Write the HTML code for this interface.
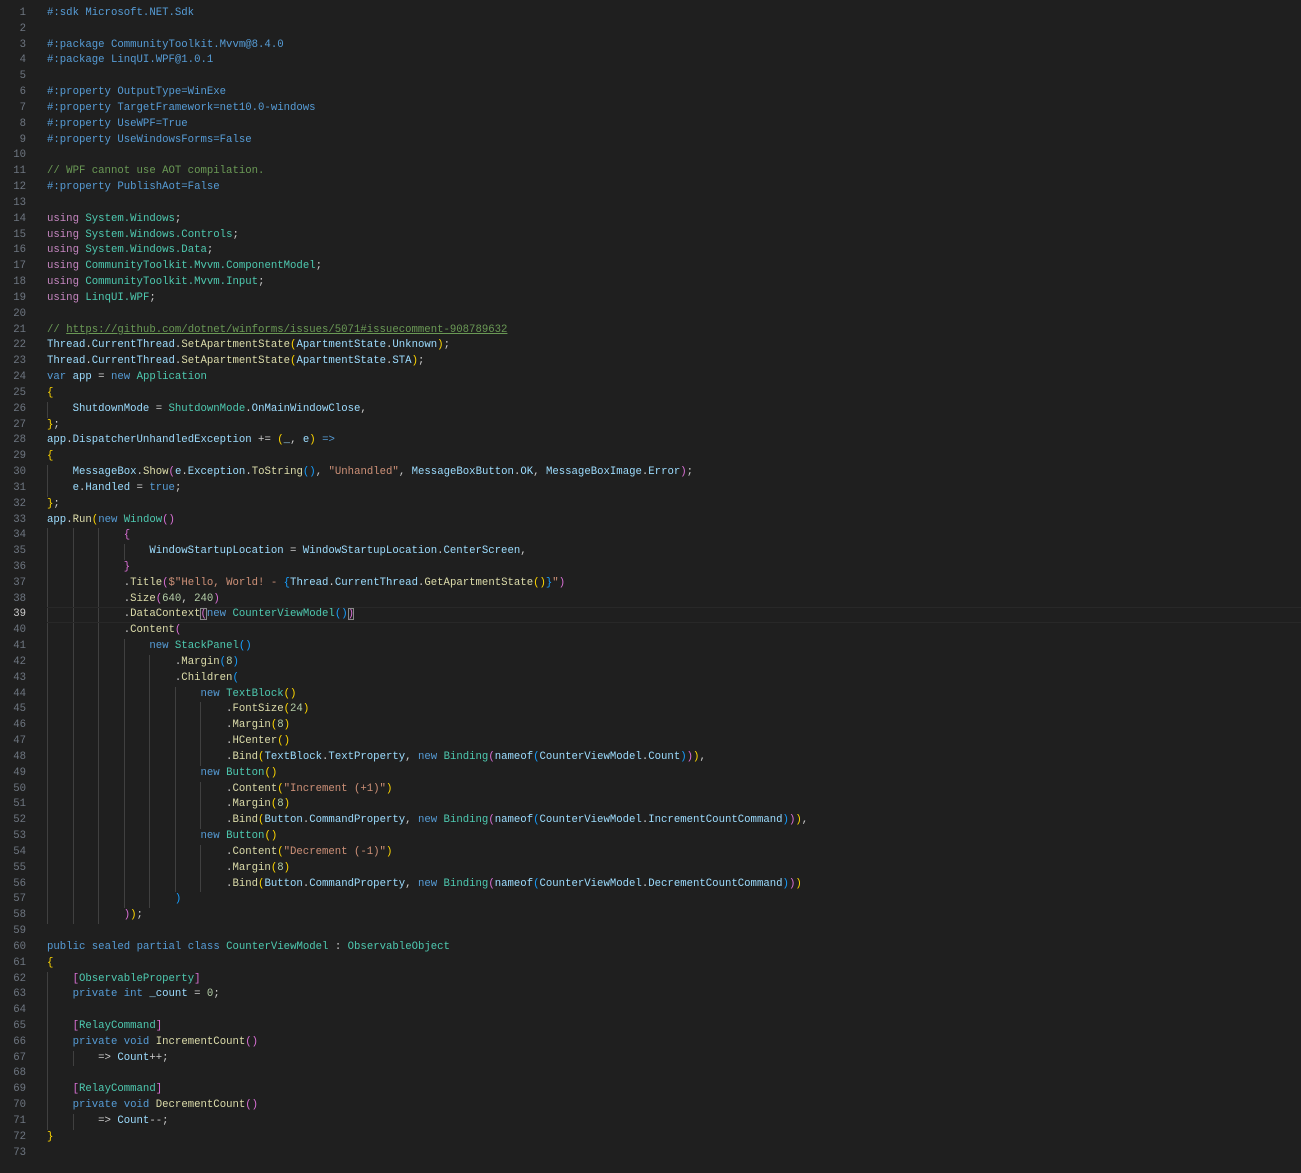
<!DOCTYPE html>
<html><head><meta charset="utf-8"><style>
html,body{margin:0;padding:0;background:#1f1f1f;}
body{width:1301px;height:1173px;overflow:hidden;position:relative;font-family:"Liberation Mono",monospace;font-size:10.67px;color:#cccccc;}
#code{position:absolute;left:0;top:6px;width:1301px;}
.l{position:relative;height:15.83px;line-height:15.83px;white-space:pre;padding-left:47px;}
.l b{position:absolute;left:0;width:26px;text-align:right;font-weight:normal;color:#6e7681;}
.cur b{color:#cccccc;}
.cur:after{content:"";position:absolute;left:47px;right:0;top:0;bottom:0;border-top:1px solid #282828;border-bottom:1px solid #282828;}
i{display:inline-block;width:4ch;height:15.83px;vertical-align:top;box-shadow:inset 1px 0 #404040;}
.k{color:#569cd6}.u{color:#c586c0}.t{color:#4ec9b0}.f{color:#dcdcaa}.v{color:#9cdcfe}.s{color:#ce9178}.n{color:#b5cea8}.c{color:#6a9955}
.y{color:#ffd700}.p{color:#da70d6}.q{color:#179fff}
.m{outline:1px solid #888;outline-offset:-1px}
.url{text-decoration:underline}
</style></head><body><div id="code">
<div class="l"><b>1</b><span class="k">#:sdk Microsoft.NET.Sdk</span></div>
<div class="l"><b>2</b></div>
<div class="l"><b>3</b><span class="k">#:package CommunityToolkit.Mvvm@8.4.0</span></div>
<div class="l"><b>4</b><span class="k">#:package LinqUI.WPF@1.0.1</span></div>
<div class="l"><b>5</b></div>
<div class="l"><b>6</b><span class="k">#:property OutputType=WinExe</span></div>
<div class="l"><b>7</b><span class="k">#:property TargetFramework=net10.0-windows</span></div>
<div class="l"><b>8</b><span class="k">#:property UseWPF=True</span></div>
<div class="l"><b>9</b><span class="k">#:property UseWindowsForms=False</span></div>
<div class="l"><b>10</b></div>
<div class="l"><b>11</b><span class="c">// WPF cannot use AOT compilation.</span></div>
<div class="l"><b>12</b><span class="k">#:property PublishAot=False</span></div>
<div class="l"><b>13</b></div>
<div class="l"><b>14</b><span class="u">using</span> <span class="t">System.Windows</span>;</div>
<div class="l"><b>15</b><span class="u">using</span> <span class="t">System.Windows.Controls</span>;</div>
<div class="l"><b>16</b><span class="u">using</span> <span class="t">System.Windows.Data</span>;</div>
<div class="l"><b>17</b><span class="u">using</span> <span class="t">CommunityToolkit.Mvvm.ComponentModel</span>;</div>
<div class="l"><b>18</b><span class="u">using</span> <span class="t">CommunityToolkit.Mvvm.Input</span>;</div>
<div class="l"><b>19</b><span class="u">using</span> <span class="t">LinqUI.WPF</span>;</div>
<div class="l"><b>20</b></div>
<div class="l"><b>21</b><span class="c">// <span class="url">https://github.com/dotnet/winforms/issues/5071#issuecomment-908789632</span></span></div>
<div class="l"><b>22</b><span class="v">Thread</span>.<span class="v">CurrentThread</span>.<span class="f">SetApartmentState</span><span class="y">(</span><span class="v">ApartmentState</span>.<span class="v">Unknown</span><span class="y">)</span>;</div>
<div class="l"><b>23</b><span class="v">Thread</span>.<span class="v">CurrentThread</span>.<span class="f">SetApartmentState</span><span class="y">(</span><span class="v">ApartmentState</span>.<span class="v">STA</span><span class="y">)</span>;</div>
<div class="l"><b>24</b><span class="k">var</span> <span class="v">app</span> = <span class="k">new</span> <span class="t">Application</span></div>
<div class="l"><b>25</b><span class="y">{</span></div>
<div class="l"><b>26</b><i></i><span class="v">ShutdownMode</span> = <span class="t">ShutdownMode</span>.<span class="v">OnMainWindowClose</span>,</div>
<div class="l"><b>27</b><span class="y">}</span>;</div>
<div class="l"><b>28</b><span class="v">app</span>.<span class="v">DispatcherUnhandledException</span> += <span class="y">(</span><span class="v">_</span>, <span class="v">e</span><span class="y">)</span> <span class="k">=&gt;</span></div>
<div class="l"><b>29</b><span class="y">{</span></div>
<div class="l"><b>30</b><i></i><span class="v">MessageBox</span>.<span class="f">Show</span><span class="p">(</span><span class="v">e</span>.<span class="v">Exception</span>.<span class="f">ToString</span><span class="q">()</span>, <span class="s">"Unhandled"</span>, <span class="v">MessageBoxButton</span>.<span class="v">OK</span>, <span class="v">MessageBoxImage</span>.<span class="v">Error</span><span class="p">)</span>;</div>
<div class="l"><b>31</b><i></i><span class="v">e</span>.<span class="v">Handled</span> = <span class="k">true</span>;</div>
<div class="l"><b>32</b><span class="y">}</span>;</div>
<div class="l"><b>33</b><span class="v">app</span>.<span class="f">Run</span><span class="y">(</span><span class="k">new</span> <span class="t">Window</span><span class="p">()</span></div>
<div class="l"><b>34</b><i></i><i></i><i></i><span class="p">{</span></div>
<div class="l"><b>35</b><i></i><i></i><i></i><i></i><span class="v">WindowStartupLocation</span> = <span class="v">WindowStartupLocation</span>.<span class="v">CenterScreen</span>,</div>
<div class="l"><b>36</b><i></i><i></i><i></i><span class="p">}</span></div>
<div class="l"><b>37</b><i></i><i></i><i></i>.<span class="f">Title</span><span class="p">(</span><span class="s">$"Hello, World! - </span><span class="q">{</span><span class="v">Thread</span>.<span class="v">CurrentThread</span>.<span class="f">GetApartmentState</span><span class="y">()</span><span class="q">}</span><span class="s">"</span><span class="p">)</span></div>
<div class="l"><b>38</b><i></i><i></i><i></i>.<span class="f">Size</span><span class="p">(</span><span class="n">640</span>, <span class="n">240</span><span class="p">)</span></div>
<div class="l cur"><b>39</b><i></i><i></i><i></i>.<span class="f">DataContext</span><span class="p m">(</span><span class="k">new</span> <span class="t">CounterViewModel</span><span class="q">()</span><span class="p m">)</span></div>
<div class="l"><b>40</b><i></i><i></i><i></i>.<span class="f">Content</span><span class="p">(</span></div>
<div class="l"><b>41</b><i></i><i></i><i></i><i></i><span class="k">new</span> <span class="t">StackPanel</span><span class="q">()</span></div>
<div class="l"><b>42</b><i></i><i></i><i></i><i></i><i></i>.<span class="f">Margin</span><span class="q">(</span><span class="n">8</span><span class="q">)</span></div>
<div class="l"><b>43</b><i></i><i></i><i></i><i></i><i></i>.<span class="f">Children</span><span class="q">(</span></div>
<div class="l"><b>44</b><i></i><i></i><i></i><i></i><i></i><i></i><span class="k">new</span> <span class="t">TextBlock</span><span class="y">()</span></div>
<div class="l"><b>45</b><i></i><i></i><i></i><i></i><i></i><i></i><i></i>.<span class="f">FontSize</span><span class="y">(</span><span class="n">24</span><span class="y">)</span></div>
<div class="l"><b>46</b><i></i><i></i><i></i><i></i><i></i><i></i><i></i>.<span class="f">Margin</span><span class="y">(</span><span class="n">8</span><span class="y">)</span></div>
<div class="l"><b>47</b><i></i><i></i><i></i><i></i><i></i><i></i><i></i>.<span class="f">HCenter</span><span class="y">()</span></div>
<div class="l"><b>48</b><i></i><i></i><i></i><i></i><i></i><i></i><i></i>.<span class="f">Bind</span><span class="y">(</span><span class="v">TextBlock</span>.<span class="v">TextProperty</span>, <span class="k">new</span> <span class="t">Binding</span><span class="p">(</span><span class="v">nameof</span><span class="q">(</span><span class="v">CounterViewModel</span>.<span class="v">Count</span><span class="q">)</span><span class="p">)</span><span class="y">)</span>,</div>
<div class="l"><b>49</b><i></i><i></i><i></i><i></i><i></i><i></i><span class="k">new</span> <span class="t">Button</span><span class="y">()</span></div>
<div class="l"><b>50</b><i></i><i></i><i></i><i></i><i></i><i></i><i></i>.<span class="f">Content</span><span class="y">(</span><span class="s">"Increment (+1)"</span><span class="y">)</span></div>
<div class="l"><b>51</b><i></i><i></i><i></i><i></i><i></i><i></i><i></i>.<span class="f">Margin</span><span class="y">(</span><span class="n">8</span><span class="y">)</span></div>
<div class="l"><b>52</b><i></i><i></i><i></i><i></i><i></i><i></i><i></i>.<span class="f">Bind</span><span class="y">(</span><span class="v">Button</span>.<span class="v">CommandProperty</span>, <span class="k">new</span> <span class="t">Binding</span><span class="p">(</span><span class="v">nameof</span><span class="q">(</span><span class="v">CounterViewModel</span>.<span class="v">IncrementCountCommand</span><span class="q">)</span><span class="p">)</span><span class="y">)</span>,</div>
<div class="l"><b>53</b><i></i><i></i><i></i><i></i><i></i><i></i><span class="k">new</span> <span class="t">Button</span><span class="y">()</span></div>
<div class="l"><b>54</b><i></i><i></i><i></i><i></i><i></i><i></i><i></i>.<span class="f">Content</span><span class="y">(</span><span class="s">"Decrement (-1)"</span><span class="y">)</span></div>
<div class="l"><b>55</b><i></i><i></i><i></i><i></i><i></i><i></i><i></i>.<span class="f">Margin</span><span class="y">(</span><span class="n">8</span><span class="y">)</span></div>
<div class="l"><b>56</b><i></i><i></i><i></i><i></i><i></i><i></i><i></i>.<span class="f">Bind</span><span class="y">(</span><span class="v">Button</span>.<span class="v">CommandProperty</span>, <span class="k">new</span> <span class="t">Binding</span><span class="p">(</span><span class="v">nameof</span><span class="q">(</span><span class="v">CounterViewModel</span>.<span class="v">DecrementCountCommand</span><span class="q">)</span><span class="p">)</span><span class="y">)</span></div>
<div class="l"><b>57</b><i></i><i></i><i></i><i></i><i></i><span class="q">)</span></div>
<div class="l"><b>58</b><i></i><i></i><i></i><span class="p">)</span><span class="y">)</span>;</div>
<div class="l"><b>59</b></div>
<div class="l"><b>60</b><span class="k">public</span> <span class="k">sealed</span> <span class="k">partial</span> <span class="k">class</span> <span class="t">CounterViewModel</span> : <span class="t">ObservableObject</span></div>
<div class="l"><b>61</b><span class="y">{</span></div>
<div class="l"><b>62</b><i></i><span class="p">[</span><span class="t">ObservableProperty</span><span class="p">]</span></div>
<div class="l"><b>63</b><i></i><span class="k">private</span> <span class="k">int</span> <span class="v">_count</span> = <span class="n">0</span>;</div>
<div class="l"><b>64</b><i></i></div>
<div class="l"><b>65</b><i></i><span class="p">[</span><span class="t">RelayCommand</span><span class="p">]</span></div>
<div class="l"><b>66</b><i></i><span class="k">private</span> <span class="k">void</span> <span class="f">IncrementCount</span><span class="p">()</span></div>
<div class="l"><b>67</b><i></i><i></i>=&gt; <span class="v">Count</span>++;</div>
<div class="l"><b>68</b><i></i></div>
<div class="l"><b>69</b><i></i><span class="p">[</span><span class="t">RelayCommand</span><span class="p">]</span></div>
<div class="l"><b>70</b><i></i><span class="k">private</span> <span class="k">void</span> <span class="f">DecrementCount</span><span class="p">()</span></div>
<div class="l"><b>71</b><i></i><i></i>=&gt; <span class="v">Count</span>--;</div>
<div class="l"><b>72</b><span class="y">}</span></div>
<div class="l"><b>73</b></div>
</div></body></html>
